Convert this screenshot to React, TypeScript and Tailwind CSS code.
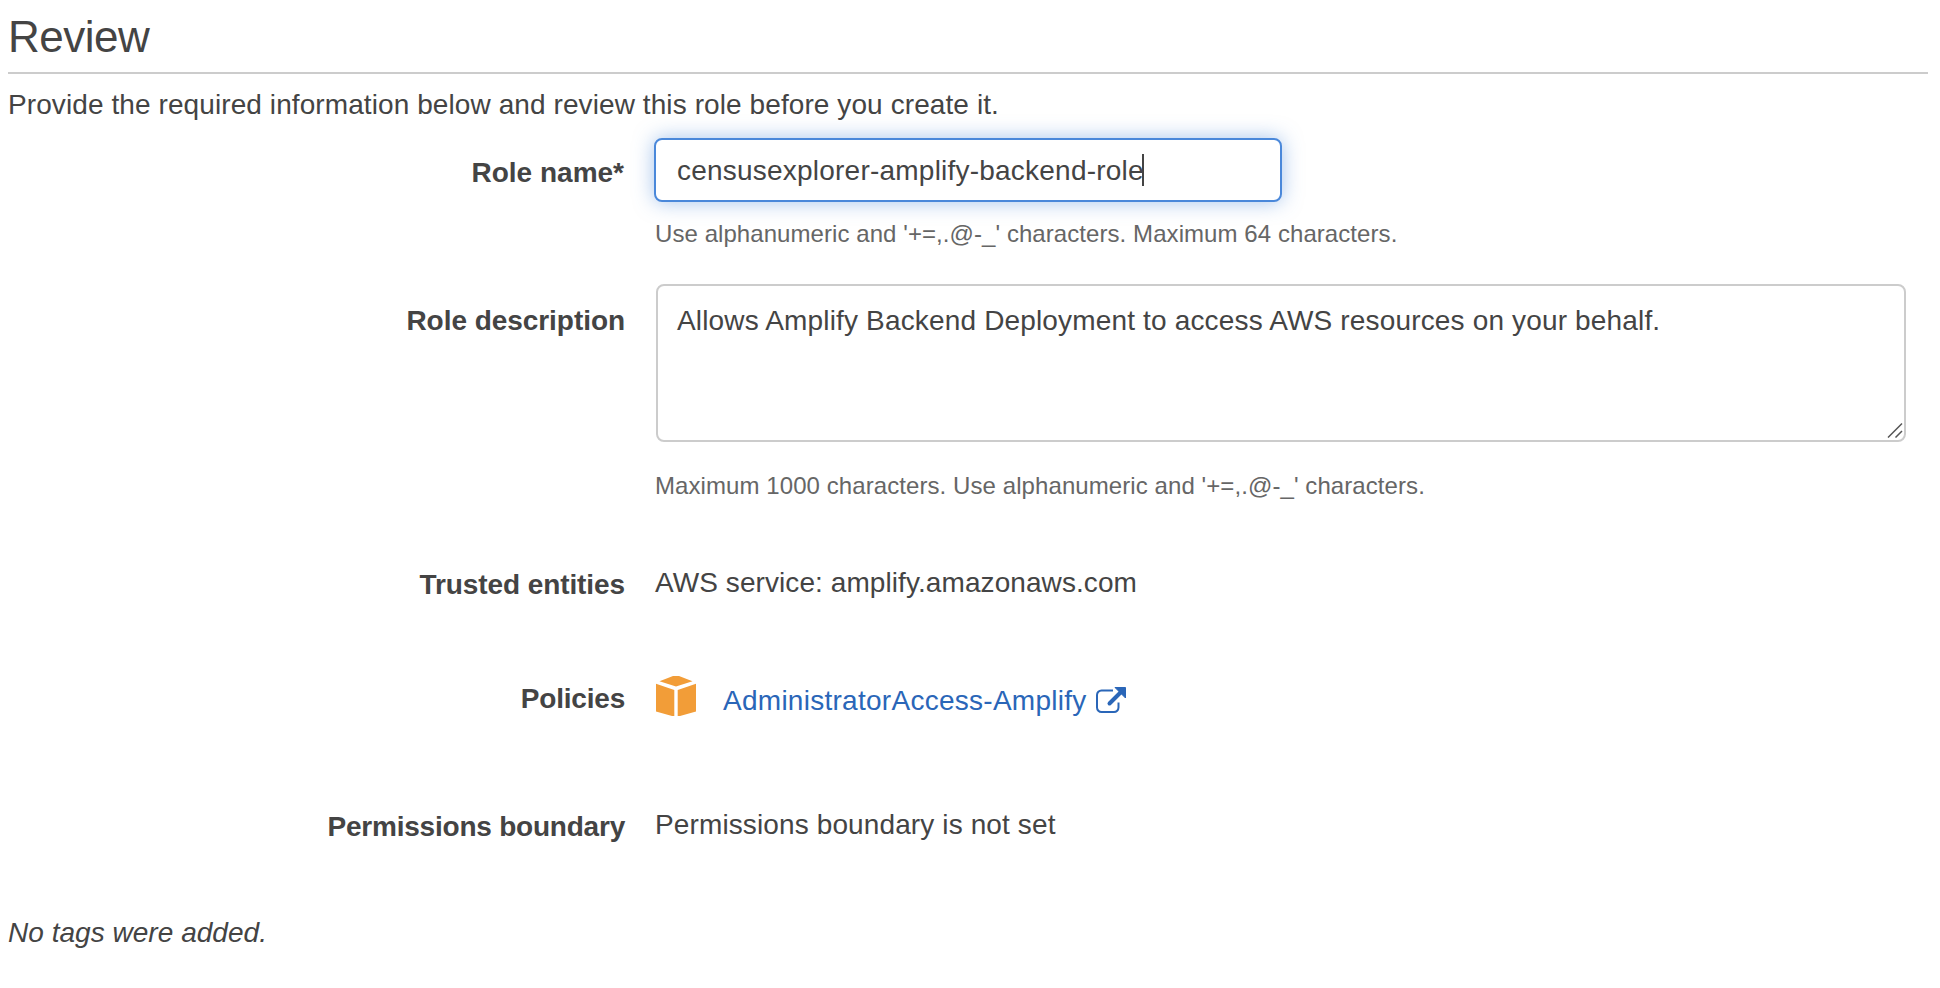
import type { ReactNode } from 'react';

function Row({ label, labelClass, className, children }: { label: string; labelClass: string; className: string; children: ReactNode }) {
  return (
    <div className={`flex items-start ${className}`}>
      <div className="w-[618px] shrink-0 text-right font-bold">
        <span className={`block whitespace-nowrap ${labelClass}`}>{label}</span>
      </div>
      {children}
    </div>
  );
}

function CubeIcon() {
  return (
    <svg width="40" height="40" viewBox="0 0 40 40" fill="#f29d38" className="block shrink-0">
      <path d="M3.5 5.300 17 0h6l13.500 5.300L20 10.400Z" />
      <path d="M0 7.700 18.300 14V40H16L0 35.500Z" />
      <path d="M40 7.700 21.700 14V40H24l16-4.500Z" />
    </svg>
  );
}

function ExternalIcon() {
  return (
    <svg width="30" height="26" viewBox="0 0 30 26" fill="none" stroke="#2a66b8" className="block shrink-0">
      <path d="M17 3.500H5.500a4.500 4.500 0 0 0-4.500 4.500V20.500a4.500 4.500 0 0 0 4.500 4.500H18a4.500 4.500 0 0 0 4.500-4.500V15.500" strokeWidth="2" />
      <path d="M13.500 16.500 25 5" strokeWidth="4" strokeLinecap="round" />
      <path d="M19 .5h10.500v10.500Z" fill="#2a66b8" strokeWidth="1" strokeLinejoin="round" />
    </svg>
  );
}

export default function App() {
  return (
    <div className="min-h-[988px] w-[1940px] overflow-hidden bg-white pl-2 pr-3 font-['Liberation_Sans',Arial,sans-serif] text-[28px] leading-[40px] text-[#444]">
      <h1 className="h-[74px] border-b-2 border-[#ccc] pt-px text-[44px] leading-[72px] tracking-[-0.5px]">Review</h1>
      <p className="mt-[11px] tracking-[0.09px]">Provide the required information below and review this role before you create it.</p>

      <Row label="Role name*" labelClass="mt-[15px] pr-0.5" className="mt-[13px]">
        <div className="ml-7">
          <div className="flex h-16 w-[628px] items-center rounded-lg border-2 border-[#4a88da] bg-white pl-[21px] shadow-[0_0_20px_rgba(74,136,218,0.5)]">
            <span className="whitespace-nowrap pt-0.5 tracking-[0.22px]">censusexplorer-amplify-backend-role</span>
            <span className="-ml-0.5 h-8 w-0.5 bg-[#444]" />
          </div>
          <p className="ml-px mt-4 text-2xl leading-8 tracking-[0.07px] text-[#666]">Use alphanumeric and '+=,.@-_' characters. Maximum 64 characters.</p>
        </div>
      </Row>

      <Row label="Role description" labelClass="mt-[17px] pr-px tracking-[-0.05px]" className="mt-[34px]">
        <div className="ml-[30px]">
          <div className="relative h-[158px] w-[1250px] rounded-lg border-2 border-[#ccc] bg-white pl-[19px] pt-[15px] tracking-[0.16px]">
            Allows Amplify Backend Deployment to access AWS resources on your behalf.
            <svg width="16" height="16" viewBox="0 0 16 16" fill="none" stroke="#555" strokeWidth="1.500" className="absolute bottom-0.5 right-px">
              <path d="M1 15.500 15 1.500M8.500 15.500 15 9" />
            </svg>
          </div>
          <p className="-ml-px mt-7 text-2xl leading-8 tracking-[0.08px] text-[#666]">Maximum 1000 characters. Use alphanumeric and '+=,.@-_' characters.</p>
        </div>
      </Row>

      <Row label="Trusted entities" labelClass="mt-0.5 pr-px tracking-[-0.09px]" className="mt-[61px]">
        <p className="ml-[29px] tracking-[0.08px]">AWS service: amplify.amazonaws.com</p>
      </Row>

      <Row label="Policies" labelClass="mt-[3px] pr-px tracking-[-0.2px]" className="mt-[71px] h-11">
        <div className="ml-[30px] flex items-start">
          <CubeIcon />
          <a className="ml-[27px] mt-[5px] flex items-start text-[#2a66b8]">
            <span className="whitespace-nowrap tracking-[0.27px]">AdministratorAccess-Amplify</span>
            <span className="ml-[9px] mt-1.5"><ExternalIcon /></span>
          </a>
        </div>
      </Row>

      <Row label="Permissions boundary" labelClass="mt-0.5 pr-px tracking-[-0.22px]" className="mt-[85px]">
        <p className="ml-[29px] tracking-[0.12px]">Permissions boundary is not set</p>
      </Row>

      <p className="mt-[66px] italic tracking-[0.03px]">No tags were added.</p>
    </div>
  );
}
